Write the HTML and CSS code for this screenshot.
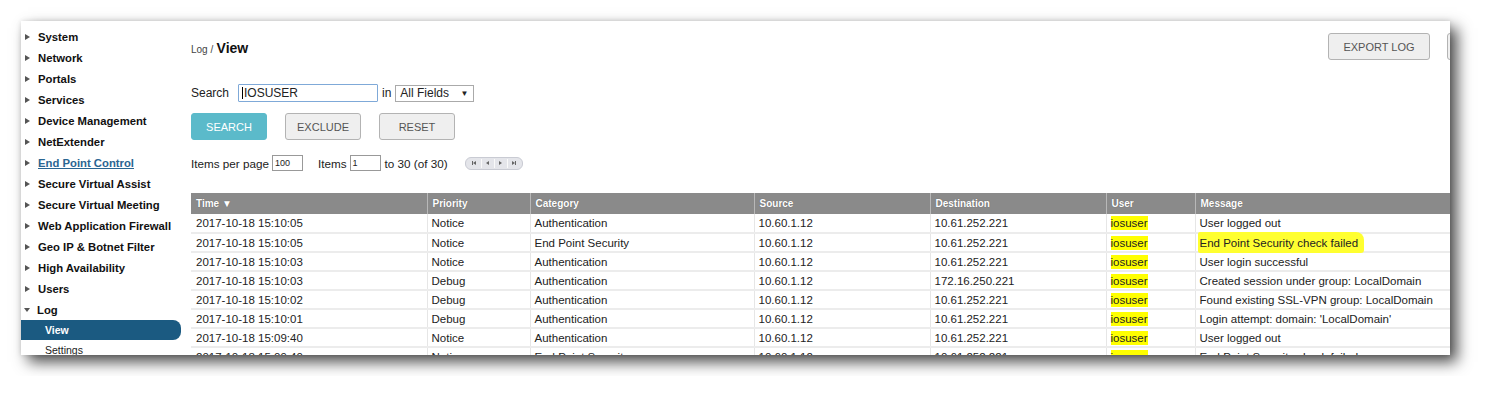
FILE: index.html
```html
<!DOCTYPE html>
<html lang="en">
<head>
    <meta charset="UTF-8">
    <title>Log View</title>
    <link rel="stylesheet" href="styles.css">
</head>
<body>
    <div class="panel">
        <ul class="sidebar">
            <li class="nav-item"><span class="arrow"></span>System</li>
            <li class="nav-item"><span class="arrow"></span>Network</li>
            <li class="nav-item"><span class="arrow"></span>Portals</li>
            <li class="nav-item"><span class="arrow"></span>Services</li>
            <li class="nav-item"><span class="arrow"></span>Device Management</li>
            <li class="nav-item"><span class="arrow"></span>NetExtender</li>
            <li class="nav-item"><span class="arrow"></span><a class="nav-link" href="#">End Point Control</a></li>
            <li class="nav-item"><span class="arrow"></span>Secure Virtual Assist</li>
            <li class="nav-item"><span class="arrow"></span>Secure Virtual Meeting</li>
            <li class="nav-item"><span class="arrow"></span>Web Application Firewall</li>
            <li class="nav-item"><span class="arrow"></span>Geo IP &amp; Botnet Filter</li>
            <li class="nav-item"><span class="arrow"></span>High Availability</li>
            <li class="nav-item"><span class="arrow"></span>Users</li>
            <li class="nav-item"><span class="arrow open"></span>Log</li>
            <li class="sub-item active">View</li>
            <li class="sub-item">Settings</li>
        </ul>

        <div class="main">
            <div class="page-head">
                <div class="crumbs"><span class="crumb-parent">Log /</span> <span class="crumb-current">View</span></div>
                <button class="btn">EXPORT LOG</button>
                <button class="btn">CLEAR LOG</button>
            </div>

            <div class="search-row">
                <label class="search-label">Search</label>
                <div class="search-input">IOSUSER</div>
                <span class="in-label">in</span>
                <div class="select">All Fields <span class="caret">&#9660;</span></div>
            </div>

            <div class="button-row">
                <button class="btn btn-primary">SEARCH</button>
                <button class="btn">EXCLUDE</button>
                <button class="btn">RESET</button>
            </div>

            <div class="paging-row">
                <span>Items per page</span>
                <div class="small-input">100</div>
                <span class="items-label">Items</span>
                <div class="small-input">1</div>
                <span>to 30 (of 30)</span>
                <div class="pager">
                    <span class="pg"><i class="bar"></i><i class="tri-l"></i></span>
                    <span class="pg"><i class="tri-l"></i></span>
                    <span class="pg"><i class="tri-r"></i></span>
                    <span class="pg"><i class="tri-r"></i><i class="bar"></i></span>
                </div>
            </div>

            <table class="log-table">
                <thead>
                    <tr>
                        <th class="c-time">Time &#9660;</th>
                        <th class="c-prio">Priority</th>
                        <th class="c-cat">Category</th>
                        <th class="c-src">Source</th>
                        <th class="c-dst">Destination</th>
                        <th class="c-user">User</th>
                        <th class="c-msg">Message</th>
                    </tr>
                </thead>
                <tbody>
                    <tr><td>2017-10-18 15:10:05</td><td>Notice</td><td>Authentication</td><td>10.60.1.12</td><td>10.61.252.221</td><td><span class="hl">iosuser</span></td><td>User logged out</td></tr>
                    <tr><td>2017-10-18 15:10:05</td><td>Notice</td><td>End Point Security</td><td>10.60.1.12</td><td>10.61.252.221</td><td><span class="hl">iosuser</span></td><td><span class="marker">End Point Security check failed</span></td></tr>
                    <tr><td>2017-10-18 15:10:03</td><td>Notice</td><td>Authentication</td><td>10.60.1.12</td><td>10.61.252.221</td><td><span class="hl">iosuser</span></td><td>User login successful</td></tr>
                    <tr><td>2017-10-18 15:10:03</td><td>Debug</td><td>Authentication</td><td>10.60.1.12</td><td>172.16.250.221</td><td><span class="hl">iosuser</span></td><td>Created session under group: LocalDomain</td></tr>
                    <tr><td>2017-10-18 15:10:02</td><td>Debug</td><td>Authentication</td><td>10.60.1.12</td><td>10.61.252.221</td><td><span class="hl">iosuser</span></td><td>Found existing SSL-VPN group: LocalDomain</td></tr>
                    <tr><td>2017-10-18 15:10:01</td><td>Debug</td><td>Authentication</td><td>10.60.1.12</td><td>10.61.252.221</td><td><span class="hl">iosuser</span></td><td>Login attempt: domain: 'LocalDomain'</td></tr>
                    <tr><td>2017-10-18 15:09:40</td><td>Notice</td><td>Authentication</td><td>10.60.1.12</td><td>10.61.252.221</td><td><span class="hl">iosuser</span></td><td>User logged out</td></tr>
                    <tr><td>2017-10-18 15:09:40</td><td>Notice</td><td>End Point Security</td><td>10.60.1.12</td><td>10.61.252.221</td><td><span class="hl">iosuser</span></td><td>End Point Security check failed</td></tr>
                </tbody>
            </table>
        </div>
    </div>
</body>
</html>
```

FILE: styles.css
```css
* {
    margin: 0;
    padding: 0;
    box-sizing: border-box;
}

body {
    font-family: "Liberation Sans", Arial, sans-serif;
    font-size: 12px;
    color: #222;
    background: #fff;
    padding: 21px;
}

.panel {
    display: flex;
    width: 1429px;
    height: 334px;
    overflow: hidden;
    background: #fff;
    box-shadow: 7px 7px 14px rgba(0, 0, 0, 0.7), 0 0 5px rgba(0, 0, 0, 0.12);
}

/* Sidebar */
.sidebar {
    list-style: none;
    width: 160px;
    flex-shrink: 0;
    padding-top: 5px;
}

.nav-item {
    display: flex;
    align-items: center;
    height: 21px;
    padding-left: 4px;
    font-size: 11.3px;
    font-weight: bold;
    color: #111;
}

.nav-link {
    color: #2a6592;
}

.arrow {
    width: 0;
    height: 0;
    margin-right: 8px;
    border-top: 3.5px solid transparent;
    border-bottom: 3.5px solid transparent;
    border-left: 5px solid #555;
}

.arrow.open {
    margin-left: -1px;
    margin-right: 7px;
    border-left: 3px solid transparent;
    border-right: 3px solid transparent;
    border-top: 4px solid #555;
    border-bottom: 0;
}

.sub-item {
    height: 20px;
    line-height: 20px;
    padding-left: 24px;
    font-size: 10.5px;
    color: #222;
}

.sub-item.active {
    background: #1b5a81;
    color: #fff;
    font-weight: bold;
    border-radius: 0 8px 8px 0;
}

/* Main area */
.main {
    flex-shrink: 0;
    width: 1368px;
    padding: 12px 0 0 10px;
}

.page-head {
    display: flex;
    align-items: center;
    gap: 17px;
    height: 27px;
}

.crumbs {
    flex: 1;
    padding-top: 2px;
}

.crumb-parent {
    font-size: 10px;
    color: #444;
}

.crumb-current {
    font-size: 14px;
    font-weight: bold;
    color: #111;
}

.btn {
    height: 27px;
    width: 76px;
    font-family: inherit;
    font-size: 11px;
    color: #555;
    background: #efefef;
    border: 1px solid #b3b3b3;
    border-radius: 3px;
}

.page-head .btn {
    width: 102px;
}

.btn-primary {
    background: #5bbaca;
    border-color: #5bbaca;
    color: #fff;
}

.search-row {
    display: flex;
    align-items: center;
    height: 18px;
    margin-top: 24px;
}

.search-label {
    width: 47px;
}

.search-input {
    width: 140px;
    height: 18px;
    line-height: 16px;
    padding-left: 3px;
    border: 1px solid #7fa9d8;
    border-radius: 1px;
    font-size: 12px;
}

.search-input::before {
    content: "";
    display: inline-block;
    width: 1px;
    height: 12px;
    margin-right: 1px;
    vertical-align: -2px;
    background: #000;
}

.in-label {
    margin: 0 4px;
}

.select {
    display: flex;
    justify-content: space-between;
    align-items: center;
    width: 79px;
    height: 17px;
    padding: 0 5px 0 4px;
    border: 1px solid #aaa;
}

.caret {
    font-size: 8px;
}

.button-row {
    display: flex;
    gap: 18px;
    margin-top: 11px;
}

.paging-row {
    display: flex;
    align-items: center;
    height: 16px;
    margin-top: 15px;
    font-size: 11.7px;
}

.small-input {
    width: 31px;
    height: 16px;
    line-height: 14px;
    margin: 0 4px 0 3px;
    padding-left: 2px;
    border: 1px solid #999;
    font-size: 9px;
}

.items-label {
    margin-left: 11px;
}

.pager {
    display: flex;
    margin-left: 17px;
    border: 1px solid #c9cbd3;
    border-radius: 6px;
    background: #e4e5ea;
    padding: 1px 2px;
}

.pg {
    display: flex;
    align-items: center;
    justify-content: center;
    width: 13px;
    height: 9px;
    border-left: 1px solid #fafafa;
}

.pg:first-child {
    border-left: 0;
}

.tri-l,
.tri-r {
    width: 0;
    height: 0;
    border-top: 2px solid transparent;
    border-bottom: 2px solid transparent;
}

.tri-l {
    border-right: 3px solid #666;
}

.tri-r {
    border-left: 3px solid #666;
}

.bar {
    width: 1px;
    height: 4px;
    background: #666;
}

/* Table */
.log-table {
    width: 1358px;
    margin-top: 22px;
    border-collapse: collapse;
    table-layout: fixed;
}

.log-table th {
    height: 21px;
    padding-left: 5px;
    text-align: left;
    font-size: 10px;
    color: #fff;
    background: #8a8a8a;
    border-left: 1px solid #b8b8b8;
    text-shadow: 0 0 1px rgba(0, 0, 0, 0.4);
}

.log-table th:first-child {
    border-left: 0;
}

.log-table td {
    height: 19px;
    padding-left: 4px;
    font-size: 11.5px;
    white-space: nowrap;
    border-left: 1px solid #e6e6e6;
    border-bottom: 2px solid #ececec;
}

.log-table td:first-child {
    border-left: 0;
    padding-left: 5px;
}

.c-time { width: 236px; }
.c-prio { width: 103px; }
.c-cat { width: 224px; }
.c-src { width: 176px; }
.c-dst { width: 176px; }
.c-user { width: 89px; }
.c-msg { width: 354px; }

.hl {
    background: #ffff00;
    padding: 1px 0;
}

.marker {
    background: #ffff30;
    padding: 5px 6px 4px 2px;
    margin-left: -2px;
    border-radius: 2px 8px 3px 2px;
}
```
